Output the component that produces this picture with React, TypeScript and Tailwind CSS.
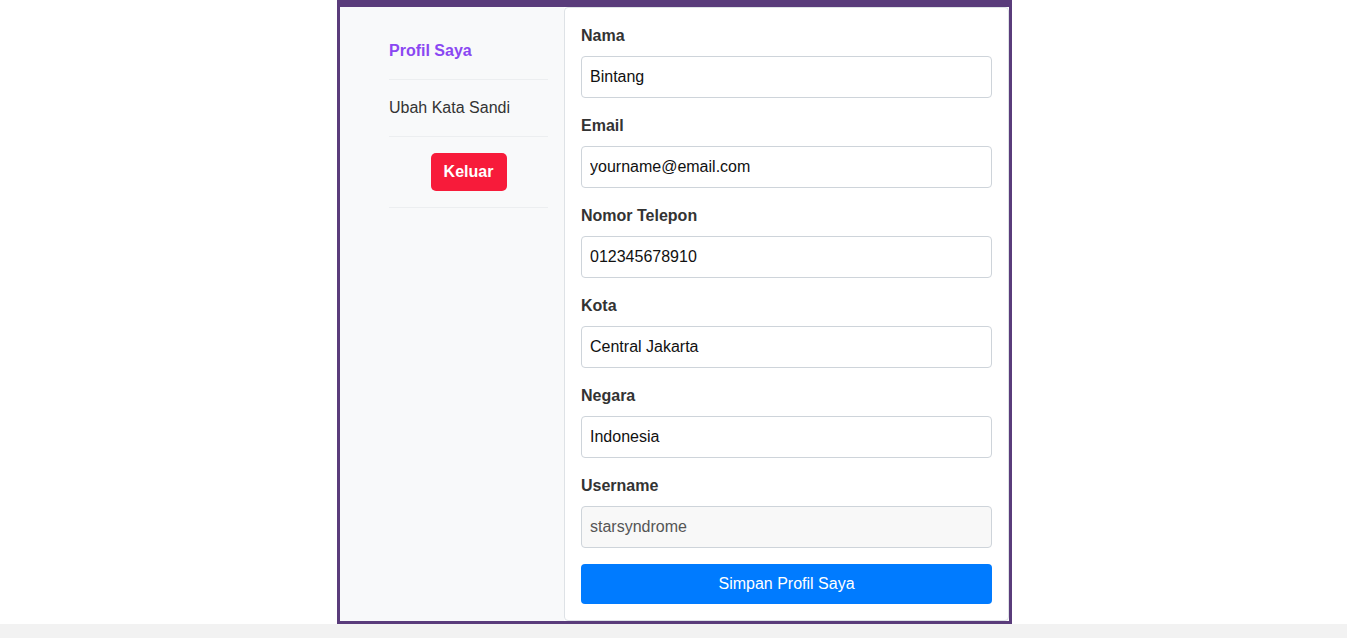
export default function App() {
    const fields = [
        { label: "Nama", value: "Bintang" },
        { label: "Email", value: "yourname@email.com" },
        { label: "Nomor Telepon", value: "012345678910" },
        { label: "Kota", value: "Central Jakarta" },
        { label: "Negara", value: "Indonesia" },
    ];

    return (
        <div className="min-h-screen bg-[#f2f2f2] font-['Liberation_Sans',Arial,sans-serif]">
            <div className="bg-white">
                <div className="ml-[337px] flex w-[675px] border-x-[3px] border-t-[7px] border-b-[3px] border-[#5a3c7b]">
                    {/* Sidebar */}
                    <aside className="w-[224px] shrink-0 bg-[#f8f9fa] pl-[49px] pr-[16px] pt-[16px]">
                        <div className="border-b border-[#eceef0] py-4 text-base leading-6 font-bold text-[#8a47f2]">
                            Profil Saya
                        </div>
                        <div className="border-b border-[#eceef0] py-4 text-base leading-6 text-[#333]">
                            Ubah Kata Sandi
                        </div>
                        <div className="flex justify-center border-b border-[#eceef0] py-4">
                            <button className="w-[76px] rounded-[5px] bg-[#f71b3a] py-[7px] text-center text-base leading-6 font-bold text-white">
                                Keluar
                            </button>
                        </div>
                    </aside>

                    {/* Form card */}
                    <main className="flex-1 rounded-[4px] border border-[#dee2e6] bg-white p-4">
                        {fields.map((f) => (
                            <div key={f.label} className="mb-4">
                                <label className="mb-2 block text-base leading-6 font-bold text-[#333]">
                                    {f.label}
                                </label>
                                <input
                                    defaultValue={f.value}
                                    className="block h-[42px] w-full rounded-[4px] border border-[#ced4da] bg-white px-2 text-base text-[#111] outline-none"
                                />
                            </div>
                        ))}
                        <div className="mb-4">
                            <label className="mb-2 block text-base leading-6 font-bold text-[#333]">
                                Username
                            </label>
                            <input
                                defaultValue="starsyndrome"
                                readOnly
                                className="block h-[42px] w-full rounded-[4px] border border-[#ced4da] bg-[#f8f8f8] px-2 text-base text-[#555] outline-none"
                            />
                        </div>
                        <button className="block h-10 w-full rounded-[4px] bg-[#007bff] text-base text-white">
                            Simpan Profil Saya
                        </button>
                    </main>
                </div>
            </div>
        </div>
    );
}
